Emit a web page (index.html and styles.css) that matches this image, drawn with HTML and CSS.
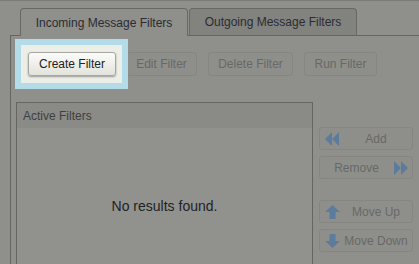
FILE: index.html
```html
<!DOCTYPE html>
<html>
<head>
<meta charset="utf-8">
<link rel="stylesheet" href="styles.css">
</head>
<body>
<div class="app">
  <div class="tabs">
    <div class="tab tab-active">Incoming Message Filters</div>
    <div class="tab tab-inactive">Outgoing Message Filters</div>
  </div>
  <div class="panel">
    <div class="toolbar">
      <div class="spotlight">
        <div class="spotlight-inner">
          <button class="btn btn-create">Create Filter</button>
        </div>
      </div>
      <button class="btn btn-disabled btn-edit">Edit Filter</button>
      <button class="btn btn-disabled btn-delete">Delete Filter</button>
      <button class="btn btn-disabled btn-run">Run Filter</button>
    </div>
    <div class="content">
      <div class="list">
        <div class="list-header">Active Filters</div>
        <div class="list-body">No results found.</div>
      </div>
      <div class="side">
        <button class="sbtn sbtn-left">
          <svg class="icon" width="15" height="14" viewBox="0 0 15 14"><polygon points="0,7 7,0 7,4 4,7 7,10 7,14"/><polygon points="7,7 14,0 14,4 11,7 14,10 14,14"/><polygon points="3,7 7,3 7,11"/><polygon points="10,7 14,3 14,11"/></svg>
          <span class="sbtn-text">Add</span>
        </button>
        <button class="sbtn sbtn-right">
          <span class="sbtn-text">Remove</span>
          <svg class="icon" width="15" height="14" viewBox="0 0 15 14"><polygon points="15,7 8,0 8,4 11,7 8,10 8,14"/><polygon points="8,7 1,0 1,4 4,7 1,10 1,14"/><polygon points="12,7 8,3 8,11"/><polygon points="5,7 1,3 1,11"/></svg>
        </button>
        <button class="sbtn sbtn-left sbtn-gap">
          <svg class="icon" width="15" height="14" viewBox="0 0 15 14"><polygon points="7.5,0 15,7 10.5,7 10.5,14 4.5,14 4.5,7 0,7"/></svg>
          <span class="sbtn-text">Move Up</span>
        </button>
        <button class="sbtn sbtn-left">
          <svg class="icon" width="15" height="14" viewBox="0 0 15 14"><polygon points="7.5,14 15,7 10.5,7 10.5,0 4.5,0 4.5,7 0,7"/></svg>
          <span class="sbtn-text">Move Down</span>
        </button>
      </div>
    </div>
  </div>
</div>
</body>
</html>
```
FILE: styles.css
```css
html, body {
  margin: 0;
  padding: 0;
}
body {
  background: #8f908c;
  font-family: "Liberation Sans", Arial, sans-serif;
  font-size: 12px;
  width: 419px;
  height: 264px;
  overflow: hidden;
}
.app {
  border-top: 1px solid #7b7c78;
  padding-top: 7px;
  height: 256px;
  overflow: hidden;
}
.tabs {
  display: flex;
  padding-left: 20px;
  height: 27px;
}
.tab {
  box-sizing: border-box;
  height: 27px;
  border: 1px solid #686965;
  border-bottom: none;
  border-radius: 4px 4px 0 0;
  display: flex;
  align-items: center;
  justify-content: center;
  color: #2b2c30;
}
.tab-active {
  width: 168px;
  height: 28px;
  background: #8f908c;
  position: relative;
  z-index: 1;
}
.tab-inactive {
  width: 168px;
  margin-left: 1px;
  background: #82837f;
  color: #2b2c2e;
}
.panel {
  margin-left: 10px;
  border-left: 1px solid #656662;
  border-top: 1px solid #656662;
  height: 228px;
}
.toolbar {
  display: flex;
  margin: 16px 0 0 17px;
  height: 24px;
}
.spotlight {
  margin: -13px -12px -13px -13px;
  padding: 6px;
  background: #b4dbe8;
  position: relative;
  z-index: 1;
}
.spotlight-inner {
  padding: 7px 6px 7px 7px;
  background: #eeeee8;
  display: flex;
}
.btn {
  box-sizing: border-box;
  height: 24px;
  font-family: inherit;
  font-size: 12px;
  padding: 0;
  border-radius: 3px;
}
.btn-create {
  width: 88px;
  color: #222;
  background: linear-gradient(#fbfbf9, #e3e3dd);
  border: 1px solid #a5a6a1;
  box-shadow: 0 1px 2px rgba(0,0,0,0.35);
}
.btn-disabled {
  background: #8e8f8b;
  border: 1px solid #858682;
  color: #686966;
}
.btn-edit {
  width: 71px;
  margin-left: 10px;
}
.btn-delete {
  width: 85px;
  margin-left: 11px;
}
.btn-run {
  width: 73px;
  margin-left: 11px;
}
.content {
  display: flex;
  margin: 26px 0 0 5px;
}
.list {
  width: 297px;
  box-sizing: border-box;
  border: 1px solid #656662;
  height: 163px;
  flex: none;
}
.list-header {
  height: 25px;
  background: #8a8b87;
  color: #3f403e;
  padding-left: 6px;
  display: flex;
  align-items: center;
}
.list-body {
  background: #91928e;
  height: 136px;
  box-sizing: border-box;
  padding-top: 70px;
  text-align: center;
  font-size: 14px;
  line-height: 17px;
  color: #222225;
}
.side {
  display: flex;
  flex-direction: column;
  margin: 25px 0 0 6px;
  width: 94px;
}
.sbtn {
  box-sizing: border-box;
  width: 94px;
  height: 23px;
  margin-bottom: 6px;
  display: flex;
  align-items: center;
  background: #8e8f8b;
  border: 1px solid #858682;
  border-radius: 3px;
  font-family: inherit;
  font-size: 12px;
  color: #686966;
}
.sbtn-left {
  padding: 0 0 0 5px;
}
.sbtn-right {
  padding: 0 4px 0 0;
}
.sbtn-gap {
  margin-top: 15px;
}
.sbtn-text {
  flex: 1;
  text-align: center;
}
.icon {
  flex: none;
  fill: #5d7b9c;
}
```
